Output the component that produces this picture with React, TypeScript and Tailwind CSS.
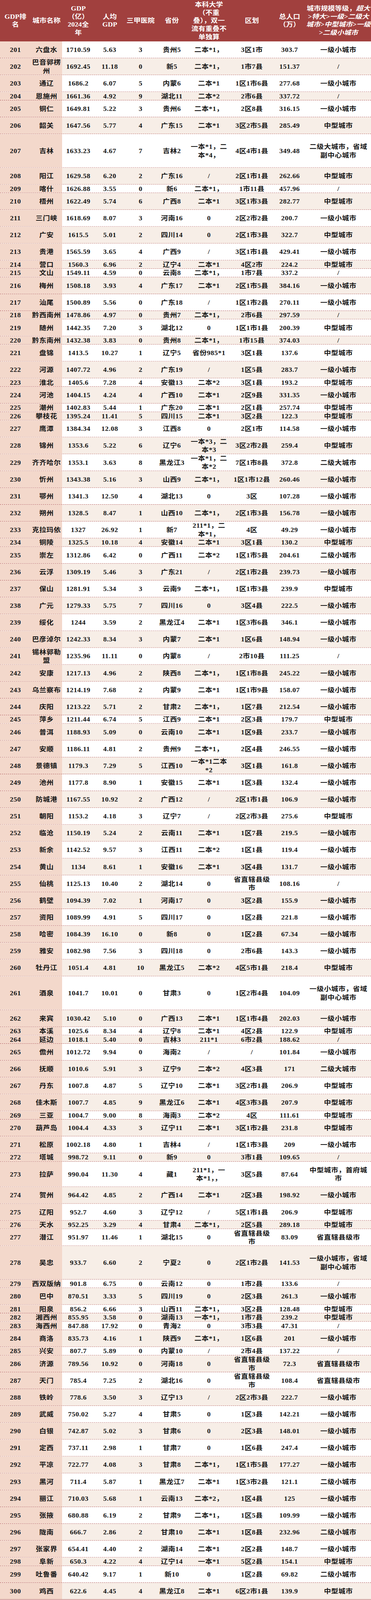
import React, { useState } from "react";

// rank, city, gdp, per-capita, hospitals, province, universities, districts, population, scale, row height
type Row = [number, string, string, string, string, string, string, string, string, string, number];

const rows: Row[] = [
  [201, "六盘水", "1710.59", "5.63", "3", "贵州5", "二本*1，", "3区1市", "303.7", "一级小城市", 48],
  [202, "巴音郭楞\n州", "1692.45", "11.18", "0", "新5", "二本*1，", "1市7县", "151.37", "/", 48],
  [203, "通辽", "1686.2", "6.07", "5", "内蒙6", "二本*1", "1区1市6县", "277.68", "一级小城市", 48],
  [204, "恩施州", "1661.36", "4.92", "9", "湖北11", "二本*2", "2市6县", "337.72", "/", 24],
  [205, "铜仁", "1649.81", "5.22", "3", "贵州6", "二本*1，", "2区8县", "316.15", "一级小城市", 48],
  [206, "韶关", "1647.56", "5.77", "4", "广东15", "二本*1", "3区2市5县", "285.49", "中型城市", 48],
  [207, "吉林", "1633.23", "4.67", "7", "吉林2", "一本*1，二\n本*4，", "4区4市1县", "349.48", "二级大城市，省域\n副中心城市", 96],
  [208, "阳江", "1629.58", "6.20", "2", "广东16", "/", "2区1市1县", "262.66", "中型城市", 48],
  [209, "喀什", "1626.88", "3.55", "0", "新6", "二本*1，", "1市11县", "457.96", "/", 24],
  [210, "梧州", "1622.49", "5.74", "6", "广西8", "二本*1", "3区1市3县", "282.77", "中型城市", 48],
  [211, "三门峡", "1618.69", "8.07", "3", "河南16", "0", "2区2市2县", "200.7", "一级小城市", 48],
  [212, "广安", "1615.5", "5.01", "2", "四川14", "0", "2区1市3县", "322.7", "中型城市", 48],
  [213, "贵港", "1565.59", "3.65", "4", "广西9", "/", "3区1市1县", "429.41", "一级小城市", 48],
  [214, "营口", "1560.3", "6.96", "2", "辽宁4", "二本*1", "4区2市", "224.2", "中型城市", 24],
  [215, "文山", "1549.11", "4.59", "0", "云南8", "二本*1，", "1市7县", "337.2", "/", 24],
  [216, "梅州", "1508.18", "3.93", "4", "广东17", "二本*1", "2区1市5县", "384.16", "一级小城市", 48],
  [217, "汕尾", "1500.89", "5.56", "0", "广东18", "/", "1区1市2县", "270.11", "一级小城市", 48],
  [218, "黔西南州", "1478.86", "4.97", "0", "贵州7", "二本*1，", "2市6县", "297.59", "/", 24],
  [219, "随州", "1442.35", "7.20", "3", "湖北12", "0", "1区1市1县", "200.39", "中型城市", 48],
  [220, "黔东南州", "1432.38", "3.83", "0", "贵州8", "二本*1，", "1市15县", "374.03", "/", 24],
  [221, "盘锦", "1413.5", "10.27", "1", "辽宁5", "省份985*1", "3区1县", "137.6", "中型城市", 48],
  [222, "河源", "1407.72", "4.96", "2", "广东19", "/", "1区5县", "283.7", "一级小城市", 48],
  [223, "淮北", "1405.6", "7.28", "4", "安徽13", "二本*2", "3区1县", "193.2", "中型城市", 24],
  [224, "河池", "1404.15", "4.24", "4", "广西10", "二本*1", "2区9县", "331.35", "一级小城市", 48],
  [225, "潮州", "1402.83", "5.44", "1", "广东20", "二本*1", "2区1县", "257.74", "中型城市", 24],
  [226, "攀枝花", "1395.24", "11.41", "5", "四川15", "二本*1", "3区2县", "122.3", "中型城市", 24],
  [227, "鹰潭", "1384.34", "12.08", "3", "江西8", "0", "2区1市", "114.58", "一级小城市", 48],
  [228, "锦州", "1353.6", "5.22", "6", "辽宁6", "一本*3，二\n本*3", "3区2市2县", "259.4", "中型城市", 48],
  [229, "齐齐哈尔", "1353.1", "3.63", "8", "黑龙江3", "一本*1，二\n本*2", "7区1市8县", "372.8", "二级大城市", 48],
  [230, "忻州", "1343.38", "5.16", "3", "山西9", "二本*1，", "1区1市12县", "260.46", "一级小城市", 48],
  [231, "鄂州", "1341.3", "12.50", "4", "湖北13", "0", "3区", "107.28", "一级小城市", 48],
  [232, "朔州", "1328.5", "8.47", "1", "山西10", "二本*1，", "2区1市3县", "156.78", "一级小城市", 48],
  [233, "克拉玛依", "1327", "26.92", "1", "新7", "211*1，二\n本*1，", "4区", "49.29", "一级小城市", 48],
  [234, "铜陵", "1325.5", "10.18", "4", "安徽14", "二本*1", "3区1县", "130.2", "中型城市", 24],
  [235, "崇左", "1312.86", "6.42", "0", "广西11", "二本*2", "1区1市5县", "204.61", "二级小城市", 48],
  [236, "云浮", "1309.19", "5.46", "3", "广东21", "/", "2区1市2县", "239.73", "一级小城市", 48],
  [237, "保山", "1281.91", "5.34", "3", "云南9", "二本*1，", "1区1市3县", "239.9", "中型城市", 48],
  [238, "广元", "1279.33", "5.75", "7", "四川16", "0", "3区4县", "222.5", "一级小城市", 48],
  [239, "绥化", "1244", "3.59", "2", "黑龙江4", "二本*1", "1区3市6县", "346.1", "一级小城市", 48],
  [240, "巴彦淖尔", "1242.33", "8.34", "3", "内蒙7", "二本*1", "1区6县", "148.94", "一级小城市", 48],
  [241, "锡林郭勒\n盟", "1235.96", "11.11", "0", "内蒙8", "/", "2市10县", "111.25", "/", 48],
  [242, "安康", "1217.13", "4.96", "2", "陕西8", "二本*1，", "1区1市8县", "245.22", "一级小城市", 48],
  [243, "乌兰察布", "1214.19", "7.68", "2", "内蒙9", "二本*1", "1区1市9县", "158.07", "一级小城市", 48],
  [244, "庆阳", "1213.22", "5.71", "2", "甘肃2", "二本*1，", "1区7县", "212.54", "一级小城市", 48],
  [245, "萍乡", "1211.44", "6.74", "5", "江西9", "二本*1", "2区3县", "179.7", "中型城市", 24],
  [246, "普洱", "1188.93", "5.09", "0", "云南10", "二本*1", "1区9县", "233.7", "一级小城市", 48],
  [247, "安顺", "1186.11", "4.81", "2", "贵州9", "二本*1，", "2区4县", "246.55", "一级小城市", 48],
  [248, "景德镇", "1179.3", "7.29", "5", "江西10", "一本*1二本\n*2", "3区1县", "161.8", "一级小城市", 48],
  [249, "池州", "1177.8", "8.90", "1", "安徽15", "二本*1", "1区3县", "132.4", "一级小城市", 48],
  [250, "防城港", "1167.55", "10.92", "2", "广西12", "/", "2区1市1县", "106.9", "一级小城市", 48],
  [251, "朝阳", "1153.2", "4.18", "3", "辽宁7", "/", "2区2市3县", "275.6", "中型城市", 48],
  [252, "临沧", "1150.19", "5.24", "2", "云南11", "二本*1", "1区7县", "219.5", "一级小城市", 48],
  [253, "新余", "1142.52", "9.57", "3", "江西11", "二本*2", "1区1县", "119.4", "一级小城市", 48],
  [254, "黄山", "1134", "8.61", "1", "安徽16", "二本*1", "3区4县", "131.7", "一级小城市", 48],
  [255, "仙桃", "1125.13", "10.40", "2", "湖北14", "0", "省直辖县级\n市", "108.16", "/", 48],
  [256, "鹤壁", "1094.39", "7.02", "1", "河南17", "0", "3区2县", "155.9", "一级小城市", 48],
  [257, "资阳", "1089.99", "4.91", "5", "四川17", "0", "1区2县", "221.8", "一级小城市", 48],
  [258, "哈密", "1084.39", "16.10", "0", "新8", "0", "1区2县", "67.34", "一级小城市", 48],
  [259, "雅安", "1082.98", "7.56", "3", "四川18", "0", "2市6县", "143.3", "一级小城市", 48],
  [260, "牡丹江", "1051.4", "4.81", "10", "黑龙江5", "二本*2", "4区5市1县", "218.4", "中型城市", 48],
  [261, "酒泉", "1041.7", "10.01", "0", "甘肃3", "0", "1区2市4县", "104.09", "一级小城市，省域\n副中心城市", 96],
  [262, "来宾", "1030.42", "5.10", "0", "广西13", "二本*1", "1区1市4县", "202.03", "一级小城市", 48],
  [263, "本溪", "1025.6", "8.34", "4", "辽宁8", "二本*1", "4区2县", "122.9", "中型城市", 24],
  [264, "延边", "1018.1", "5.40", "0", "吉林3", "211*1", "6市2县", "188.62", "/", 24],
  [265, "儋州", "1012.72", "9.94", "0", "海南2", "/", "/", "101.84", "一级小城市", 48],
  [266, "抚顺", "1010.6", "5.91", "3", "辽宁9", "二本*2", "4区3县", "171", "二级大城市", 48],
  [267, "丹东", "1007.8", "4.87", "5", "辽宁10", "二本*1", "3区2市1县", "206.9", "中型城市", 48],
  [268, "佳木斯", "1007.7", "4.85", "9", "黑龙江6", "二本*1", "4区3市3县", "207.9", "中型城市", 48],
  [269, "三亚", "1004.7", "9.00", "8", "海南3", "二本*2", "4区", "111.61", "中型城市", 24],
  [270, "葫芦岛", "1004.4", "4.33", "3", "辽宁11", "二本*1", "3区1市2县", "231.8", "中型城市", 48],
  [271, "松原", "1002.18", "4.80", "1", "吉林4", "/", "1区1市3县", "209", "一级小城市", 48],
  [272, "塔城", "998.72", "9.11", "0", "新9", "0", "3市1县", "109.65", "/", 24],
  [273, "拉萨", "990.04", "11.30", "4", "藏1", "211*1，一\n本*1，，", "3区5县", "87.64", "中型城市，首府城\n市", 72],
  [274, "贺州", "964.42", "4.85", "2", "广西14", "二本*1", "2区3县", "198.92", "一级小城市", 48],
  [275, "辽阳", "952.7", "4.60", "3", "辽宁12", "/", "5区1市1县", "206.9", "中型城市", 48],
  [276, "天水", "952.25", "3.29", "4", "甘肃4", "二本*1，", "2区5县", "289.18", "中型城市", 24],
  [277, "潜江", "951.97", "11.46", "1", "湖北15", "0", "省直辖县级\n市", "83.09", "省直辖县级市", 48],
  [278, "吴忠", "933.7", "6.60", "2", "宁夏2", "0", "2区1市2县", "141.53", "一级小城市，省域\n副中心城市", 96],
  [279, "西双版纳", "901.8", "6.75", "0", "云南12", "0", "1市2县", "133.6", "/", 24],
  [280, "巴中", "870.51", "3.33", "5", "四川19", "0", "2区3县", "261.3", "一级小城市", 48],
  [281, "阳泉", "856.2", "6.66", "3", "山西11", "二本*1，", "3区2县", "128.48", "中型城市", 24],
  [282, "湘西州", "855.95", "3.58", "0", "湖南13", "一本*1，", "1市7县", "239.2", "中型城市", 24],
  [283, "海西州", "847.88", "17.92", "0", "青海2", "0", "3市3县", "47.31", "/", 24],
  [284, "商洛", "835.73", "4.16", "1", "陕西9", "二本*1，", "1区6县", "201", "一级小城市", 48],
  [285, "兴安", "807.7", "5.89", "0", "内蒙10", "/", "2市4县", "137.22", "/", 24],
  [286, "济源", "789.56", "10.92", "0", "河南18", "0", "省直辖县级\n市", "72.3", "省直辖县级市", 48],
  [287, "天门", "785.4", "7.25", "2", "湖北16", "0", "省直辖县级\n市", "108.4", "省直辖县级市", 48],
  [288, "铁岭", "778.6", "3.50", "3", "辽宁13", "/", "2区2市3县", "222.7", "一级小城市", 48],
  [289, "武威", "750.02", "5.27", "4", "甘肃5", "0", "1区3县", "142.21", "一级小城市", 48],
  [290, "白银", "742.87", "5.02", "3", "甘肃6", "0", "2区3县", "148.01", "一级小城市", 48],
  [291, "定西", "737.11", "2.98", "1", "甘肃7", "0", "1区6县", "247.4", "一级小城市", 48],
  [292, "平凉", "722.77", "4.08", "3", "甘肃8", "二本*1，", "1区1市5县", "177.27", "一级小城市", 48],
  [293, "黑河", "711.4", "5.87", "1", "黑龙江7", "二本*1", "1区3市2县", "121.1", "二级小城市", 48],
  [294, "丽江", "710.03", "5.68", "1", "云南13", "二本*2，", "1区4县", "125", "一级小城市", 48],
  [295, "张掖", "680.88", "6.19", "2", "甘肃9", "二本*1，", "1区5县", "109.99", "一级小城市", 48],
  [296, "陇南", "666.7", "2.86", "2", "甘肃10", "二本*1", "1区8县", "232.96", "二级小城市", 48],
  [297, "张家界", "654.41", "4.40", "2", "湖南14", "二本*1", "2区2县", "148.7", "一级小城市", 48],
  [298, "阜新", "650.3", "4.22", "4", "辽宁14", "一本*1", "5区2县", "154.1", "中型城市", 24],
  [299, "吐鲁番", "640.42", "9.17", "1", "新10", "0", "1区2县", "69.82", "二级小城市", 48],
  [300, "鸡西", "622.6", "4.45", "4", "黑龙江8", "二本*1", "6区2市1县", "139.9", "中型城市", 48],
];

const PAGE_H = 4559;

const cols = "grid grid-cols-[79px_80px_83px_78px_80px_80px_110px_110px_83px_167px]";

const HeadCell = ({ children }: { children: React.ReactNode }) => (
  <div className="flex items-center justify-center overflow-hidden text-center whitespace-pre">{children}</div>
);

const Cell = ({ children, pink }: { children: React.ReactNode; pink?: boolean }) => (
  <div
    className={`flex items-center justify-center overflow-hidden text-center whitespace-pre-line tracking-[0.5px] ${
      pink ? "bg-[#f3d8cb]" : ""
    }`}
  >
    {children}
  </div>
);

export default function App() {
  // the browser may cap the window below the page height; squeeze the table to fit it
  const [k] = useState(() => Math.min(1, window.innerHeight / PAGE_H));

  return (
    <div className="w-[950px] overflow-hidden bg-white" style={{ height: Math.floor(PAGE_H * k) }}>
      <div
        className="w-[950px] origin-top font-['Liberation_Serif','Noto_Sans_CJK_SC',serif] font-bold text-[#161616]"
        style={{ transform: `scaleY(${k})` }}
      >
        {/* header */}
        <div className={`${cols} h-[118px] bg-[#a1403e] text-[18px] leading-[23px] text-white`}>
          <HeadCell>{"GDP排\n名"}</HeadCell>
          <HeadCell>城市名称</HeadCell>
          <HeadCell>{"GDP\n（亿）\n2024全\n年"}</HeadCell>
          <HeadCell>{"人均\nGDP"}</HeadCell>
          <HeadCell>三甲医院</HeadCell>
          <HeadCell>省份</HeadCell>
          <HeadCell>{"本科大学\n（不重\n叠），双一\n流有重叠不\n单独算"}</HeadCell>
          <HeadCell>区划</HeadCell>
          <HeadCell>{"总人口\n（万）"}</HeadCell>
          <HeadCell>
            <div>
              城市规模等级，<i>超大</i>
              <br />
              <i>&gt;特大&gt;一级&gt;二级大</i>
              <br />
              <i>城市&gt;中型城市&gt;一级</i>
              <br />
              <i>&gt;二级小城市</i>
            </div>
          </HeadCell>
        </div>

        {/* rows: height comes from the data */}
        {rows.map((r, i) => (
          <div
            key={r[0]}
            style={{ height: r[10] }}
            className={`${cols} overflow-hidden ${i % 2 === 0 ? "bg-white" : "bg-[#f7eee7]"} border-b ${
              i === rows.length - 1 ? "border-solid border-[#a1403e]" : "border-dashed border-[#a94848]"
            } text-[18px] leading-[24px]`}
          >
            <Cell pink>{r[0]}</Cell>
            <Cell pink>{r[1]}</Cell>
            <Cell>{r[2]}</Cell>
            <Cell>{r[3]}</Cell>
            <Cell>{r[4]}</Cell>
            <Cell>{r[5]}</Cell>
            <Cell>{r[6]}</Cell>
            <Cell>{r[7]}</Cell>
            <Cell>{r[8]}</Cell>
            <Cell>{r[9]}</Cell>
          </div>
        ))}
      </div>
    </div>
  );
}
